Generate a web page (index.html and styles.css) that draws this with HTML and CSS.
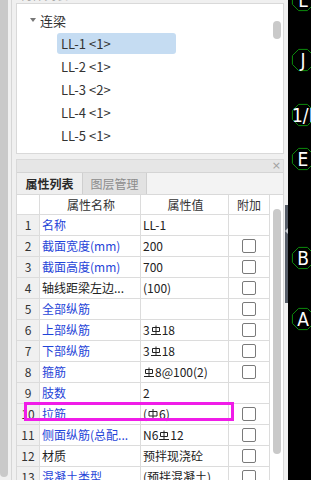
FILE: index.html
```html
<!DOCTYPE html>
<html lang="zh">
<head>
<meta charset="utf-8">
<link rel="stylesheet" href="styles.css">
</head>
<body>
<div class="app">
  <div class="vscroll"><div class="vthumb"></div></div>
  <div class="sep"></div>
  <div class="main">
    <div class="cap"><span>构件列表</span></div>
    <div class="tree-panel">
      <div class="tree">
        <div class="group"><span class="caret"></span>连梁</div>
        <div class="item sel">LL-1 &lt;1&gt;</div>
        <div class="item">LL-2 &lt;1&gt;</div>
        <div class="item">LL-3 &lt;2&gt;</div>
        <div class="item">LL-4 &lt;1&gt;</div>
        <div class="item">LL-5 &lt;1&gt;</div>
      </div>
      <div class="tscroll"><div class="tthumb"></div></div>
    </div>
    <div class="prop-panel">
      <div class="ph"><span class="close">×</span></div>
      <div class="tabs"><div class="tab on">属性列表</div><div class="tab off">图层管理</div></div>
      <div class="grid-wrap">
        <div class="grid">
          <div class="row head"><div class="c n"></div><div class="c k">属性名称</div><div class="c v">属性值</div><div class="c x">附加</div></div>
          <div class="row"><div class="c n">1</div><div class="c k blue">名称</div><div class="c v">LL-1</div><div class="c x"></div></div>
          <div class="row"><div class="c n">2</div><div class="c k blue">截面宽度(mm)</div><div class="c v">200</div><div class="c x"><span class="cb"></span></div></div>
          <div class="row"><div class="c n">3</div><div class="c k blue">截面高度(mm)</div><div class="c v">700</div><div class="c x"><span class="cb"></span></div></div>
          <div class="row"><div class="c n">4</div><div class="c k">轴线距梁左边...</div><div class="c v">(100)</div><div class="c x"><span class="cb"></span></div></div>
          <div class="row"><div class="c n">5</div><div class="c k blue">全部纵筋</div><div class="c v"></div><div class="c x"><span class="cb"></span></div></div>
          <div class="row"><div class="c n">6</div><div class="c k blue">上部纵筋</div><div class="c v">3<svg class="rb" viewBox="0 0 10 10"><path d="M5 0.5V9.5M1.5 2.5H8.5V6.5H1.5ZM0 9.5H10"/></svg>18</div><div class="c x"><span class="cb"></span></div></div>
          <div class="row"><div class="c n">7</div><div class="c k blue">下部纵筋</div><div class="c v">3<svg class="rb" viewBox="0 0 10 10"><path d="M5 0.5V9.5M1.5 2.5H8.5V6.5H1.5ZM0 9.5H10"/></svg>18</div><div class="c x"><span class="cb"></span></div></div>
          <div class="row"><div class="c n">8</div><div class="c k blue">箍筋</div><div class="c v"><svg class="rb" viewBox="0 0 10 10"><path d="M5 0.5V9.5M1.5 2.5H8.5V6.5H1.5ZM0 9.5H10"/></svg>8@100(2)</div><div class="c x"><span class="cb"></span></div></div>
          <div class="row"><div class="c n">9</div><div class="c k blue">肢数</div><div class="c v">2</div><div class="c x"></div></div>
          <div class="row"><div class="c n">10</div><div class="c k blue">拉筋</div><div class="c v">(<svg class="rb" viewBox="0 0 10 10"><path d="M5 0V10M1 2.5H9V7H1Z"/></svg>6)</div><div class="c x"><span class="cb"></span></div></div>
          <div class="row"><div class="c n">11</div><div class="c k blue">侧面纵筋(总配...</div><div class="c v">N6<svg class="rb" viewBox="0 0 10 10"><path d="M5 0.5V9.5M1.5 2.5H8.5V6.5H1.5ZM0 9.5H10"/></svg>12</div><div class="c x"><span class="cb"></span></div></div>
          <div class="row"><div class="c n">12</div><div class="c k">材质</div><div class="c v">预拌现浇砼</div><div class="c x"><span class="cb"></span></div></div>
          <div class="row"><div class="c n">13</div><div class="c k blue">混凝土类型</div><div class="c v">(预拌混凝土)</div><div class="c x"><span class="cb"></span></div></div>
        </div>
        <div class="gscroll"><div class="gthumb"></div></div>
      </div>
      <div class="mark"></div>
    </div>
  </div>
  <div class="splitter"><div class="handle"><span class="tri"></span></div></div>
  <div class="canvas">
    <div class="lbl" style="top:-12px"><svg viewBox="0 0 24 24"><polygon points="16.4,1.4 22.6,7.6 22.6,16.4 16.4,22.6 7.6,22.6 1.4,16.4 1.4,7.6 7.6,1.4"/></svg><span>L</span></div>
    <div class="lbl" style="top:48px"><svg viewBox="0 0 24 24"><polygon points="16.4,1.4 22.6,7.6 22.6,16.4 16.4,22.6 7.6,22.6 1.4,16.4 1.4,7.6 7.6,1.4"/></svg><span>J</span></div>
    <div class="lbl wide" style="top:103px"><svg viewBox="0 0 24 24"><polygon points="16.4,1.4 22.6,7.6 22.6,16.4 16.4,22.6 7.6,22.6 1.4,16.4 1.4,7.6 7.6,1.4"/></svg><span>1/F</span></div>
    <div class="lbl" style="top:147px"><svg viewBox="0 0 24 24"><polygon points="16.4,1.4 22.6,7.6 22.6,16.4 16.4,22.6 7.6,22.6 1.4,16.4 1.4,7.6 7.6,1.4"/></svg><span>E</span></div>
    <div class="lbl" style="top:246px"><svg viewBox="0 0 24 24"><polygon points="16.4,1.4 22.6,7.6 22.6,16.4 16.4,22.6 7.6,22.6 1.4,16.4 1.4,7.6 7.6,1.4"/></svg><span>B</span></div>
    <div class="lbl" style="top:307px"><svg viewBox="0 0 24 24"><polygon points="16.4,1.4 22.6,7.6 22.6,16.4 16.4,22.6 7.6,22.6 1.4,16.4 1.4,7.6 7.6,1.4"/></svg><span>A</span></div>
  </div>
</div>
</body>
</html>
```

FILE: styles.css
```css
* { box-sizing: border-box; margin: 0; padding: 0; }
html, body { width: 311px; height: 480px; overflow: hidden; background: #f0f0f0; }
body { font-family: "Noto Sans CJK SC", "Microsoft YaHei", sans-serif; font-size: 12px; color: #222; }

.app { display: flex; height: 480px; }

.vscroll { width: 8px; flex: none; background: #f0f0f0; }
.vthumb { height: 477px; background: #c9c9c9; border-radius: 0 0 4px 4px; }
.sep { width: 4px; flex: none; background: #f0f0f0; border-right: 1px solid #d6d6d6; }

.main { width: 272px; flex: none; padding-left: 4px; display: flex; flex-direction: column; }
.cap { height: 3px; overflow: hidden; padding-left: 4px; }
.cap span { display: block; margin-top: -12px; line-height: 14px; color: #aaa; font-size: 12px; }

.tree-panel { height: 151px; flex: none; border: 1px solid #d9d9d9; background: #fff; display: flex; margin-bottom: 5px; }
.tree { flex: 1; padding-top: 4px; }
.group { height: 24px; display: flex; align-items: center; padding-left: 13px; font-size: 13px; color: #333; }
.caret { width: 0; height: 0; border-top: 4px solid #777; border-left: 3px solid transparent; border-right: 3px solid transparent; margin-right: 4px; }
.item { margin: 1px 0 2px 40px; width: 119px; height: 21px; line-height: 21px; padding-left: 4px; font-size: 13px; color: #333; border-radius: 3px; white-space: pre; }
.item.sel { background: #c5dcf2; }
.tscroll { width: 13px; flex: none; padding-left: 3px; padding-right: 2px; }
.tthumb { margin-top: 17px; height: 18px; background: #c9c9c9; border-radius: 4px; }

.prop-panel { flex: 1; position: relative; border: 1px solid #d9d9d9; border-bottom: none; background: #fff; overflow: hidden; display: flex; flex-direction: column; }
.ph { height: 12px; flex: none; background: #e6e6e6; display: flex; justify-content: flex-end; align-items: center; padding-right: 2px; }
.close { font-size: 11px; line-height: 12px; color: #a0a0a0; font-family: "DejaVu Sans", sans-serif; }
.tabs { height: 22px; flex: none; display: flex; background: #f3f3f3; border-top: 1px solid #d4d4d4; }
.tab { height: 21px; line-height: 21px; text-align: center; border-right: 1px solid #cfcfcf; font-size: 12px; }
.tab.on { width: 66px; background: #efefef; color: #2a2a2a; font-weight: bold; }
.tab.off { width: 64px; background: #e2e2e2; color: #8c8c8c; }

.grid-wrap { display: flex; flex: 1; border-top: 1px solid #d9d9d9; }
.grid { width: 253px; flex: none; }
.row { display: grid; grid-template-columns: 23px 101px 88px 41px; height: 21px; border-bottom: 1px solid #dcdcdc; }
.row.head { height: 20px; }
.c { border-right: 1px solid #dcdcdc; line-height: 20px; white-space: nowrap; overflow: hidden; display: flex; align-items: center; }
.head .c { justify-content: center; color: #333; line-height: 19px; }
.n { background: #f0f0f0; justify-content: center; color: #333; }
.head .n { background: #fff; }
.k { padding-left: 2px; color: #222; }
.k.blue { color: #1f44d8; }
.v { padding-left: 2px; color: #222; }
.x { justify-content: center; }
.cb { width: 14px; height: 14px; border: 1px solid #7a7a7a; border-radius: 2px; background: #fff; }
.rb { width: 10px; height: 10px; margin: 0 1px; fill: none; stroke: #222; stroke-width: 1; }

.gscroll { width: 13px; flex: none; background: #fff; padding-left: 3px; padding-right: 2px; }
.gthumb { margin-top: 14px; height: 245px; background: #c9c9c9; border-radius: 4px; }

.mark { position: absolute; left: 7px; top: 242px; width: 210px; height: 19px; border: 3px solid #f01ce8; }

.splitter { width: 4px; flex: none; background: #f0f0f0; padding-left: 1px; }
.handle { margin-top: 205px; height: 98px; background: #565d68; display: flex; align-items: center; justify-content: center; }
.tri { width: 0; height: 0; border-right: 3px solid #c8ccd2; border-top: 3px solid transparent; border-bottom: 3px solid transparent; margin-top: -46px; }

.canvas { width: 23px; flex: none; background: #000; position: relative; overflow: hidden; }
.lbl { position: absolute; left: 3px; width: 24px; height: 24px; }
.lbl svg { position: absolute; left: 0; top: 0; width: 24px; height: 24px; fill: none; stroke: #0c8a0c; stroke-width: 1; }
.lbl span { position: absolute; left: 0; top: 0; width: 24px; height: 24px; line-height: 24px; text-align: center; color: #fff; font-family: "Liberation Sans Narrow", "DejaVu Sans Condensed", "Liberation Sans", sans-serif; font-size: 19px; }
.lbl.wide span { left: 1px; width: auto; text-align: left; }
```
